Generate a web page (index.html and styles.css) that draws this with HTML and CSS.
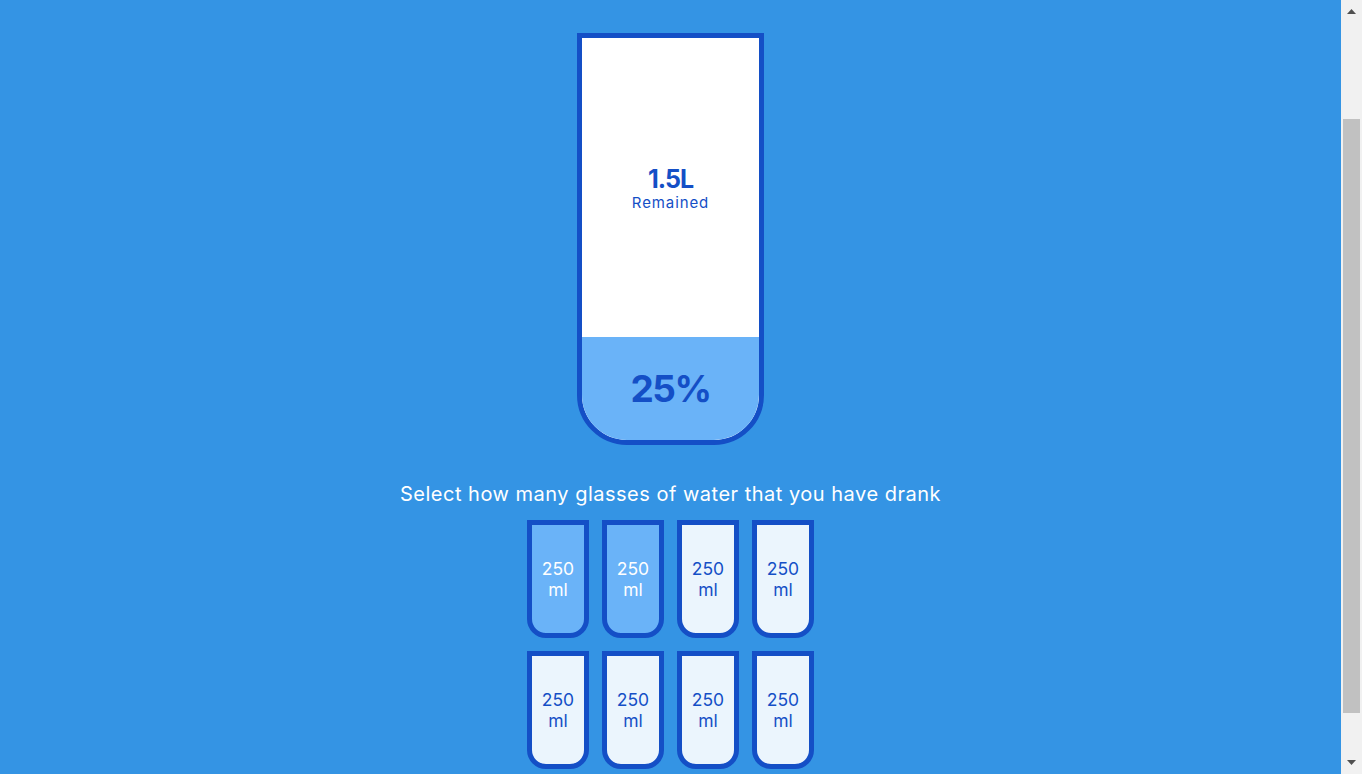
FILE: index.html
```html
<!DOCTYPE html>
<html lang="en">
<head>
<meta charset="UTF-8">
<title>Drink Water</title>
<link rel="stylesheet" href="styles.css">
</head>
<body>
  <div class="cup">
    <div class="remained">
      <span class="liters">1.5L</span>
      <small class="label">Remained</small>
    </div>
    <div class="percentage">25%</div>
  </div>

  <p class="text">Select how many glasses of water that you have drank</p>

  <div class="cups">
    <div class="cup-small full">250 ml</div>
    <div class="cup-small full">250 ml</div>
    <div class="cup-small">250 ml</div>
    <div class="cup-small">250 ml</div>
    <div class="cup-small">250 ml</div>
    <div class="cup-small">250 ml</div>
    <div class="cup-small">250 ml</div>
    <div class="cup-small">250 ml</div>
  </div>

  <div class="scrollbar" aria-hidden="true">
    <svg class="arrow" width="21" height="17" viewBox="0 0 21 17"><polygon points="6,14 15,14 10.5,9" fill="#505050"/></svg>
    <div class="track"><div class="thumb"></div></div>
    <svg class="arrow" width="21" height="17" viewBox="0 0 21 17"><polygon points="6,3 15,3 10.5,8" fill="#505050"/></svg>
  </div>
</body>
</html>
```

FILE: styles.css
```css
* {
  box-sizing: border-box;
}

html {
  background-color: #3494e4;
}

body {
  background-color: #3494e4;
  color: #fff;
  font-family: Inter, "Noto Sans", sans-serif;
  display: flex;
  flex-direction: column;
  align-items: center;
  margin: 0;
  padding: 33px 21px 56px 0;
}

.cup {
  background-color: #fff;
  border: 5px solid #144fc6;
  color: #144fc6;
  border-radius: 0 0 50px 50px;
  height: 412px;
  width: 187px;
  margin: 0 0 37px;
  display: flex;
  flex-direction: column;
  overflow: hidden;
}

.remained {
  flex: 1;
  display: flex;
  flex-direction: column;
  align-items: center;
  justify-content: center;
  text-align: center;
}

.liters {
  font-size: 25px;
  font-weight: 700;
  line-height: 30px;
  letter-spacing: -1px;
}

.label {
  font-size: 15px;
  line-height: 18px;
  letter-spacing: 0.9px;
}

.percentage {
  background-color: #6ab3f8;
  height: 103px;
  display: flex;
  align-items: center;
  justify-content: center;
  font-weight: 700;
  font-size: 37px;
  letter-spacing: -1.5px;
}

.text {
  margin: 0 0 7px;
  font-size: 20px;
  line-height: 25px;
  letter-spacing: 0.5px;
  text-align: center;
}

.cups {
  display: flex;
  flex-wrap: wrap;
  justify-content: center;
  width: 350px;
}

.cup-small {
  width: 62px;
  height: 118px;
  margin: 6px 6.5px 7px;
  border: 5px solid #144fc6;
  border-radius: 0 0 19px 19px;
  background-color: rgba(255, 255, 255, 0.9);
  color: #144fc6;
  font-size: 17.5px;
  line-height: 21px;
  display: flex;
  align-items: center;
  justify-content: center;
  text-align: center;
}

.cup-small.full {
  background-color: #6ab3f8;
  color: #fff;
}

.scrollbar {
  position: fixed;
  top: 0;
  right: 0;
  width: 21px;
  height: 100vh;
  background-color: #f1f1f1;
  display: flex;
  flex-direction: column;
}

.arrow {
  display: block;
  flex: none;
}

.track {
  flex: 1;
  padding: 102px 2px 44px;
  display: flex;
}

.thumb {
  flex: 1;
  background-color: #c1c1c1;
}
```
